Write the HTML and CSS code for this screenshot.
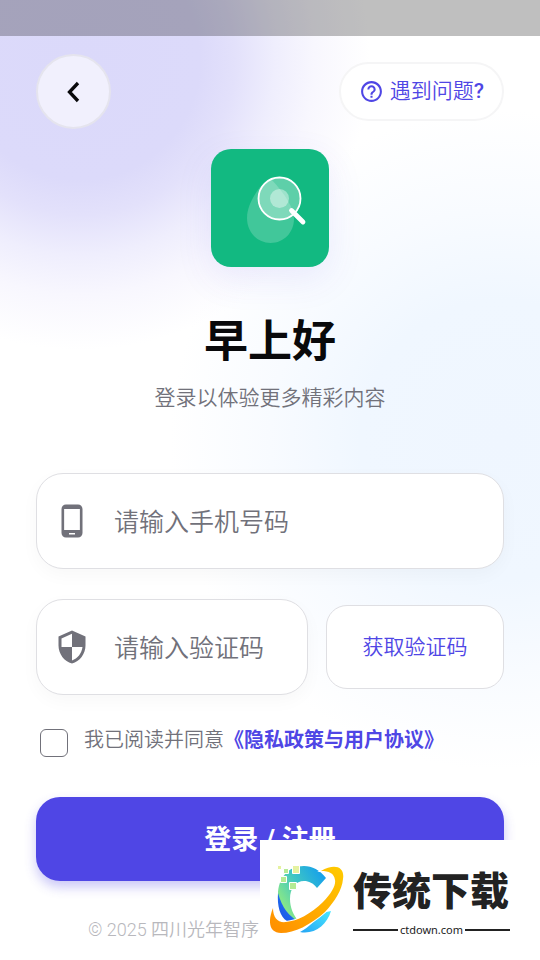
FILE: index.html
```html
<!DOCTYPE html>
<html lang="zh-CN">
<head>
<meta charset="utf-8">
<meta name="viewport" content="width=device-width, initial-scale=1">
<title>登录</title>
<link rel="stylesheet" href="styles.css">
</head>
<body>
<div class="screen">
  <div class="statusbar"></div>
  <header class="topbar">
    <button class="back" type="button" aria-label="返回">
      <svg width="18" height="24" viewBox="0 0 18 24"><path d="M13 3 4.500 12l8.500 9" fill="none" stroke="#09090b" stroke-width="3.300"/></svg>
    </button>
    <a class="help" href="#help">
      <svg width="25" height="25" viewBox="0 0 24 24" fill="currentColor"><path d="M11 18h2v-2h-2v2zm1-16C6.480 2 2 6.480 2 12s4.480 10 10 10 10-4.480 10-10S17.520 2 12 2zm0 18c-4.410 0-8-3.590-8-8s3.590-8 8-8 8 3.590 8 8-3.590 8-8 8zm0-14c-2.210 0-4 1.790-4 4h2c0-1.100.9-2 2-2s2 .9 2 2c0 2-3 1.750-3 5h2c0-2.250 3-2.500 3-5 0-2.210-1.790-4-4-4z"/></svg>
      <span>遇到问题<b>?</b></span>
    </a>
  </header>
  <main class="content">
    <svg class="logo" viewBox="0 0 118 118" role="img" aria-label="应用图标">
      <path d="M49 38C41 49 36 59 36 69c0 14 10 25 23.500 25S83 83 83 70c0-11-9-25-23-40z" fill="#fff" fill-opacity=".2"/>
      <circle cx="68.500" cy="49.500" r="21" fill="#fff" fill-opacity=".32" stroke="#fff" stroke-width="1.800"/>
      <circle cx="68.500" cy="49.500" r="9.500" fill="#fff" fill-opacity=".4"/>
      <path d="m80.500 61.500 11.500 11.500" stroke="#fff" stroke-width="4.800" stroke-linecap="round"/>
    </svg>
    <h1 class="title">早上好</h1>
    <p class="subtitle">登录以体验更多精彩内容</p>
    <form class="form">
      <label class="field">
        <svg width="36" height="36" viewBox="0 0 24 24" fill="currentColor"><path d="M16 1H8C6.340 1 5 2.340 5 4v16c0 1.660 1.340 3 3 3h8c1.660 0 3-1.340 3-3V4c0-1.660-1.340-3-3-3zm-2 20h-4v-1h4v1zm3.250-3H6.750V4h10.500v14z"/></svg>
        <input type="tel" placeholder="请输入手机号码" aria-label="手机号码">
      </label>
      <div class="code-row">
        <label class="field">
          <svg width="36" height="36" viewBox="0 0 24 24" fill="currentColor"><path d="M12 1 3 5v6c0 5.550 3.840 10.740 9 12 5.160-1.260 9-6.450 9-12V5l-9-4zm0 10.990h7c-.53 4.120-3.280 7.790-7 8.940V12H5V6.300l7-3.110v8.800z"/></svg>
          <input type="text" inputmode="numeric" placeholder="请输入验证码" aria-label="验证码">
        </label>
        <button class="send" type="button">获取验证码</button>
      </div>
      <div class="agree">
        <input id="agree" type="checkbox">
        <p><label for="agree">我已阅读并同意</label><a href="#terms">《隐私政策与用户协议》</a></p>
      </div>
      <button class="submit" type="button">登录 / 注册</button>
    </form>
  </main>
  <footer class="footer">© 2025 四川光年智序</footer>
  <aside class="stamp">
    <svg width="76" height="76" viewBox="0 0 76 76" aria-hidden="true">
      <defs>
        <linearGradient id="c" x1="1" y1=".1" x2="0" y2=".8"><stop offset="0" stop-color="#109bf0"/><stop offset=".5" stop-color="#3fc6c4"/><stop offset=".9" stop-color="#8be985"/></linearGradient>
        <linearGradient id="o" x1="1" y1="0" x2="0" y2="1"><stop offset="0" stop-color="#ffcb00"/><stop offset="1" stop-color="#ff8d00"/></linearGradient>
        <linearGradient id="b" x1="0" y1="1" x2="1" y2="0"><stop offset="0" stop-color="#1d4fe0"/><stop offset="1" stop-color="#2088ff"/></linearGradient>
        <linearGradient id="l" x1="0" y1="1" x2="1" y2="0"><stop offset="0" stop-color="#25a4f4"/><stop offset="1" stop-color="#48e8ff"/></linearGradient>
      </defs>
      <path d="M56 16C50 8 42 4 34 4 18 4 8 16 8 33c0 12 8 24 21 27-6-7-9-15-9-23 0-11 6-18 14-18 5 0 9 2 13 7z" fill="url(#c)"/>
      <path d="M8 31c-1 13 2 24 9 28 4 1 8 2 12 1C19 54 12 46 8 31z" fill="url(#b)"/>
      <path d="M61 49c-4 14-17 24-31 21 8-4 17-13 22-19 3-1 6-1 9-2z" fill="url(#l)"/>
      <path d="M51 9c14-8 24-4 22 8-1 11-8 22-18 33C40 63 25 71 11 71 0 71-3 61 3 46c0 10 5 15 13 14 11-1 25-8 37-20 9-9 13-17 12-22-1-7-6-9-14-9z" fill="url(#o)" stroke="#fff" stroke-width="2" paint-order="stroke"/>
      <g fill="#b5eb94" stroke="#fff"><path d="M22.500 3.500h7v8h-7z" fill="#e5f2a0"/><path d="M10.500 14.500h6v6h-6zM19.500 20.500h7v7h-7zM13.500 6.500h5v5h-5z"/><path d="M7.500 3.500h4v4h-4z" fill="#e5f2a0"/></g>
    </svg>
    <div class="stamp-text">
      <strong>传统下载</strong>
      <span>ctdown.com</span>
    </div>
  </aside>
</div>
</body>
</html>
```
FILE: styles.css
```css
* { box-sizing: border-box; }
body {
  margin: 0;
  font-family: Roboto, "Noto Sans CJK SC", sans-serif;
  font-weight: 350;
  color: #71717a;
}
button, input { font: inherit; }
a { color: #4f46e5; text-decoration: none; }
.screen {
  position: relative;
  min-height: 100vh;
  overflow: hidden;
  background:
    radial-gradient(circle at 80px 60px, #dbd9fa 0, #dcdafa 120px, #e3e1fb 155px, #efeefd 195px, #f8f7fe 235px, #fff0 290px),
    radial-gradient(circle at 500px 440px, #eff6ff 0, #f0f7ff 140px, #f8fbff 230px, #fff0 330px),
    #fff;
}
.statusbar { height: 36px; background: rgba(0, 0, 0, .25); }
.topbar {
  display: flex;
  justify-content: space-between;
  align-items: center;
  padding: 18px 36px 20px;
}
.back {
  display: grid;
  place-items: center;
  width: 75px;
  height: 75px;
  padding: 0;
  border: 2px solid #e5e4ee;
  border-radius: 50%;
  background: #f1f0fd;
}
.help {
  display: flex;
  align-items: center;
  gap: 6px;
  height: 59px;
  padding: 0 18px;
  border: 2px solid #f5f5f6;
  border-radius: 30px;
  background: #fff;
  font-size: 21px;
  line-height: 30px;
}
.help span { padding-bottom: 2px; }
.help b { font-weight: 500; }
.content { padding: 0 36px; text-align: center; }
.logo {
  display: block;
  width: 118px;
  margin: 0 auto;
  border-radius: 20px;
  background: #12b981;
  box-shadow: 0 12px 36px rgba(79, 70, 229, .1);
}
.title {
  margin: 42px 0 0;
  font-size: 44px;
  line-height: 66px;
  font-weight: 700;
  color: #09090b;
}
.subtitle {
  margin: 6px 0 0;
  font-size: 21px;
  line-height: 34px;
}
.form { margin-top: 58px; }
.field {
  display: flex;
  align-items: center;
  gap: 24px;
  min-width: 0;
  height: 96px;
  padding: 0 17px;
  border: 1px solid #dfdfe3;
  border-radius: 27px;
  background: #fff;
  box-shadow: 0 6px 18px rgba(0, 0, 0, .03);
}
.field svg { flex: none; }
.field input {
  flex: 1;
  min-width: 0;
  padding: 2px 0 0;
  border: 0;
  outline: 0;
  background: none;
  font-size: 25px;
}
.field input::placeholder { color: #71717a; opacity: 1; }
.code-row {
  display: grid;
  grid-template-columns: minmax(0, 1fr) 178px;
  align-items: center;
  gap: 18px;
  margin-top: 30px;
}
.send {
  height: 84px;
  padding: 0 0 4px;
  border: 1px solid #dfdfe3;
  border-radius: 21px;
  background: #fff;
  color: #4f46e5;
  font-size: 21px;
}
.agree {
  display: flex;
  align-items: flex-start;
  gap: 16px;
  margin: 30px 0 36px;
  padding-left: 4px;
  font-size: 20px;
  line-height: 30px;
}
.agree input {
  appearance: none;
  flex: none;
  width: 28px;
  height: 28px;
  margin: 4px 0;
  border: 1px solid #71717a;
  border-radius: 6px;
}
.agree p { margin: 0; }
.agree a { font-weight: 700; }
.submit {
  display: block;
  width: 100%;
  height: 84px;
  padding: 0 0 4px;
  border: 0;
  border-radius: 24px;
  background: #4f46e5;
  box-shadow: 0 6px 12px rgba(79, 70, 229, .3);
  color: #fff;
  font-size: 27px;
  font-weight: 700;
}
.footer {
  padding: 34px 36px 14px 88px;
  font-size: 18px;
  line-height: 30px;
  color: #b8b8bd;
  white-space: nowrap;
}
.stamp {
  position: absolute;
  right: 0;
  bottom: 0;
  display: flex;
  align-items: center;
  gap: 7px;
  width: 280px;
  height: 120px;
  padding-left: 10px;
  background: #fff;
  color: #222;
}
.stamp-text { width: 157px; }
.stamp-text strong {
  display: block;
  padding-top: 4px;
  font-size: 39px;
  line-height: 52px;
  font-weight: 900;
}
.stamp-text span {
  display: flex;
  align-items: center;
  gap: 2px;
  margin-top: 4px;
  font: 400 11px/16px "Noto Sans", sans-serif;
}
.stamp-text span::before, .stamp-text span::after {
  content: "";
  flex: 1;
  height: 2px;
  background: #222;
}
```
